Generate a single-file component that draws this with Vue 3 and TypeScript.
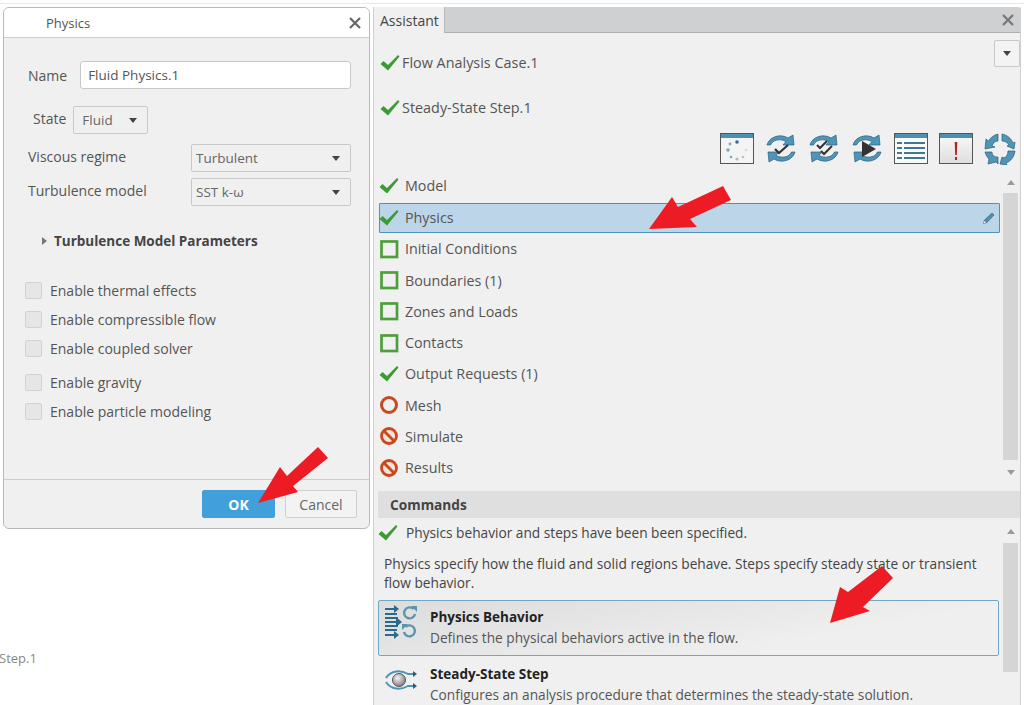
<script setup lang="ts">
type Status = 'check' | 'square' | 'ring' | 'no'
const steps: { label: string; status: Status; active?: boolean }[] = [
  { label: 'Model', status: 'check' },
  { label: 'Physics', status: 'check', active: true },
  { label: 'Initial Conditions', status: 'square' },
  { label: 'Boundaries (1)', status: 'square' },
  { label: 'Zones and Loads', status: 'square' },
  { label: 'Contacts', status: 'square' },
  { label: 'Output Requests (1)', status: 'check' },
  { label: 'Mesh', status: 'ring' },
  { label: 'Simulate', status: 'no' },
  { label: 'Results', status: 'no' },
]
const groupA = ['Enable thermal effects', 'Enable compressible flow', 'Enable coupled solver']
const groupB = ['Enable gravity', 'Enable particle modeling']
const arrows = [
  '258,503 280,467 287,476 318,447 328,458 293,486 298,492',
  '649,229 672,197 678,207 723,186 731,200 690,219 697,227',
  '830,623 840,587 848,592 882,566 893,578 863,607 870,611',
]
const checkPath = 'M.5 11 3.5 8 8 12 18 2 19.5 3.5 8 17.5Z'
const syncTop = 'M2 12 C4 4 15 0 23 5 L28 2 L29 12 L18 12 L21 8.5 C15 5.5 8 6.5 5.5 12 Z'
const syncBottom = 'M30 19 C28 27 17 31 9 26 L4 29 L3 19 L14 19 L11 22.5 C17 25.5 24 24.5 26.5 19 Z'
</script>

<template>
  <div class="page">
    <div class="left">
      <section class="dialog">
        <header class="dlg-head">
          <span class="title">Physics</span>
          <svg class="x" width="14" height="14" viewBox="0 0 14 14"><path d="M2 2 12 12M12 2 2 12" stroke="#666" stroke-width="2.2" /></svg>
        </header>
        <div class="dlg-body">
          <div class="name-row">
            <label>Name</label>
            <div class="input">Fluid Physics.1</div>
          </div>
          <div class="state-row">
            <label>State</label>
            <div class="select small">Fluid<i class="caret"></i></div>
          </div>
          <div class="field-row first">
            <label>Viscous regime</label>
            <div class="select wide">Turbulent<i class="caret"></i></div>
          </div>
          <div class="field-row">
            <label>Turbulence model</label>
            <div class="select wide">SST k-ω<i class="caret"></i></div>
          </div>
          <div class="expander"><i class="tri"></i>Turbulence Model Parameters</div>
          <div class="checks">
            <div v-for="c in groupA" :key="c" class="check-row"><span class="box"></span>{{ c }}</div>
          </div>
          <div class="checks second">
            <div v-for="c in groupB" :key="c" class="check-row"><span class="box"></span>{{ c }}</div>
          </div>
        </div>
        <footer class="dlg-foot">
          <button class="btn ok">OK</button>
          <button class="btn">Cancel</button>
        </footer>
      </section>
      <div class="stray">Step.1</div>
    </div>

    <section class="assistant">
      <div class="tabs">
        <div class="tab">Assistant</div>
        <svg class="tab-x" width="14" height="14" viewBox="0 0 14 14"><path d="M2 2 12 12M12 2 2 12" stroke="#777" stroke-width="2.2" /></svg>
      </div>

      <div class="cases">
        <div class="case-list">
          <div class="case">
            <svg class="st" width="20" height="18" viewBox="0 0 20 18"><path :d="checkPath" fill="#3d9a35" /></svg>
            Flow Analysis Case.1
          </div>
          <div class="case">
            <svg class="st" width="20" height="18" viewBox="0 0 20 18"><path :d="checkPath" fill="#3d9a35" /></svg>
            Steady-State Step.1
          </div>
        </div>
        <div class="drop"><i class="caret"></i></div>
      </div>

      <div class="toolbar">
        <svg class="tool" width="34" height="32" viewBox="0 0 34 32">
          <rect x="0.5" y="0.5" width="33" height="30" fill="#f4f4f4" stroke="#555" />
          <rect x="1" y="1" width="32" height="4" fill="#4f8fb0" />
          <g fill="#7fa6bc"><circle cx="17" cy="9" r="1.8" fill="#2f6f95" /><circle cx="10" cy="11" r="1.4" /><circle cx="8" cy="17" r="1.8" /><circle cx="11" cy="24" r="1.3" /><circle cx="17" cy="26" r="1.6" fill="#a9bcc7" /><circle cx="23" cy="24" r="1.3" fill="#b5c3cc" /><circle cx="26" cy="17" r="1.2" fill="#d4d8db" /></g>
        </svg>
        <svg class="tool" width="32" height="32" viewBox="0 0 32 32">
          <path :d="syncTop" fill="#4f95b8" stroke="#2b5d78" stroke-width=".7" />
          <path :d="syncBottom" fill="#4f95b8" stroke="#2b5d78" stroke-width=".7" />
          <path d="M10 16 14 20 23 12" fill="none" stroke="#333" stroke-width="2.2" />
        </svg>
        <svg class="tool" width="32" height="32" viewBox="0 0 32 32">
          <path :d="syncTop" fill="#4f95b8" stroke="#2b5d78" stroke-width=".7" />
          <path :d="syncBottom" fill="#4f95b8" stroke="#2b5d78" stroke-width=".7" />
          <path d="M9 12 12 15 19 8M13 18 16 21 24 13" fill="none" stroke="#333" stroke-width="2" />
        </svg>
        <svg class="tool" width="32" height="32" viewBox="0 0 32 32">
          <path :d="syncTop" fill="#4f95b8" stroke="#2b5d78" stroke-width=".7" />
          <path :d="syncBottom" fill="#4f95b8" stroke="#2b5d78" stroke-width=".7" />
          <path d="M11 8 25 16 11 24Z" fill="#333" />
        </svg>
        <svg class="tool" width="34" height="32" viewBox="0 0 34 32">
          <rect x="0.5" y="0.5" width="33" height="30" fill="#fafafa" stroke="#555" />
          <rect x="1" y="1" width="32" height="4" fill="#4f8fb0" />
          <path d="M3 10H8M10 10H31M3 15H8M10 15H31M3 20H8M10 20H31M3 25H8M10 25H31" stroke="#3f7896" stroke-width="2" />
        </svg>
        <svg class="tool" width="34" height="32" viewBox="0 0 34 32">
          <defs><linearGradient id="alertBg" x1="0" y1="0" x2="0" y2="1"><stop offset="0" stop-color="#fafafa" /><stop offset="1" stop-color="#dedede" /></linearGradient></defs>
          <rect x="0.5" y="0.5" width="33" height="30" fill="url(#alertBg)" stroke="#555" />
          <rect x="1" y="1" width="32" height="4" fill="#4f8fb0" />
          <path d="M15.7 9H18.3L17.8 22H16.2Z" fill="#b02525" />
          <rect x="16" y="24" width="2" height="3" fill="#b02525" />
        </svg>
        <svg class="tool" width="32" height="32" viewBox="0 0 32 32">
          <g fill="#4f95b8" stroke="#2b5d78" stroke-width=".7">
            <path d="M14 1V8C11 8 9 10 8 13L11 14 1 16 2 6 4.500 8C7 4 10 2 14 1Z" />
            <path d="M18 1C23 2 27 5 29 10L31 9 30 16 23 13 25 12C24 10 21 8 18 8Z" />
            <path d="M31 18C30 24 27 28 22 30L23 32 16 31 18 24 20 25C22 24 24 22 24 18Z" />
            <path d="M1 19H8C8 22 10 24 14 24V31L12 29 4 31 5 26C3 24 2 22 1 19Z" />
          </g>
        </svg>
      </div>

      <div class="steps-wrap">
        <ul class="steps">
          <li v-for="s in steps" :key="s.label" class="step" :class="{ active: s.active }">
            <svg width="20" height="20" viewBox="0 0 20 20" class="st">
              <path v-if="s.status === 'check'" :d="checkPath" fill="#3d9a35" />
              <rect v-else-if="s.status === 'square'" x="2.500" y="2.500" width="15.500" height="15.500" fill="#f0f0f0" stroke="#4f9e3c" stroke-width="2.700" />
              <circle v-else-if="s.status === 'ring'" cx="10" cy="10" r="7.500" fill="none" stroke="#c8481f" stroke-width="3" />
              <g v-else>
                <circle cx="10" cy="10" r="7.500" fill="#f3e2dc" stroke="#c8481f" stroke-width="2.800" />
                <path d="M5 5 15 15" stroke="#c8481f" stroke-width="2.800" />
              </g>
            </svg>
            <span>{{ s.label }}</span>
            <svg v-if="s.active" class="pencil" width="14" height="14" viewBox="0 0 14 14">
              <path d="M1.500 12.500 2.500 9 10 2 12 4 5 11.500Z" fill="#4f8fb0" stroke="#2b5d78" stroke-width=".6" />
              <path d="M1.500 12.500 2.500 10 4 11.500Z" fill="#fff" />
            </svg>
          </li>
        </ul>
        <div class="scroll upper">
          <i class="up"></i>
          <div class="thumb"></div>
          <i class="down"></i>
        </div>
      </div>

      <div class="cmd-head">Commands</div>

      <div class="cmd-wrap">
        <div class="cmd-main">
          <div class="cmd-status">
            <svg width="20" height="18" viewBox="0 0 20 18"><path :d="checkPath" fill="#3d9a35" /></svg>
            Physics behavior and steps have been been specified.
          </div>
          <p class="desc">Physics specify how the fluid and solid regions behave. Steps specify steady state or transient flow behavior.</p>
          <div class="cmd card">
            <svg class="cmd-icon" width="38" height="38" viewBox="0 0 38 38">
              <path d="M1 5H12M1 10H13M1 14H14M1 18H16M1 22H14M1 26H13M1 31H12" fill="none" stroke="#2b6a8c" stroke-width="2" />
              <path d="M10 1 15 5 10 9ZM12 13 18 18 12 23ZM10 27 15 31 10 35Z" fill="#2b6a8c" />
              <path d="M29.500 5A5.500 5.500 0 1 0 31 10" fill="none" stroke="#5a94b0" stroke-width="2.400" />
              <path d="M27 2H33V8Z" fill="#5a94b0" />
              <path d="M21.500 23A5.500 5.500 0 1 1 20 28" fill="none" stroke="#5a94b0" stroke-width="2.400" />
              <path d="M24 20H18V26Z" fill="#5a94b0" />
            </svg>
            <div class="cmd-text">
              <strong>Physics Behavior</strong>
              <span>Defines the physical behaviors active in the flow.</span>
            </div>
          </div>
          <div class="cmd">
            <svg class="cmd-icon" width="38" height="38" viewBox="0 0 38 38">
              <defs><radialGradient id="ball" cx=".4" cy=".35" r=".7"><stop offset="0" stop-color="#f5f5f5" /><stop offset="1" stop-color="#777" /></radialGradient></defs>
              <path d="M2 17C7 9 17 9 24 13H31M2 21C7 29 17 29 24 25H31" fill="none" stroke="#4f95b8" stroke-width="2" />
              <path d="M29 10 33 13 29 16ZM29 22 33 25 29 28Z" fill="#2b5d78" />
              <circle cx="15" cy="19" r="6.500" fill="url(#ball)" stroke="#555" />
            </svg>
            <div class="cmd-text">
              <strong>Steady-State Step</strong>
              <span>Configures an analysis procedure that determines the steady-state solution.</span>
            </div>
          </div>
        </div>
        <div class="scroll lower">
          <i class="up"></i>
          <div class="thumb"></div>
        </div>
      </div>
    </section>

    <svg class="arrows" width="1024" height="705" viewBox="0 0 1024 705">
      <polygon v-for="p in arrows" :key="p" :points="p" fill="#ed1c24" />
    </svg>
  </div>
</template>

<style>
html, body { margin: 0; background: #fff; }
</style>

<style scoped>
* { box-sizing: border-box; }
.page {
  position: relative;
  width: 1024px;
  height: 705px;
  overflow: hidden;
  display: flex;
  gap: 3px;
  padding: 7px 3px 0 3px;
  background: linear-gradient(#fff 3px, #e7e8e9 3px, #e7e8e9 4px, #fff 4px);
  font-family: "Open Sans", "Noto Sans", sans-serif;
  font-size: 14px;
  color: #555;
}
.left { width: 367px; flex: none; display: flex; flex-direction: column; }
.dialog {
  height: 522px;
  display: flex;
  flex-direction: column;
  background: #f0f0f0;
  border: 1px solid #b9b9b9;
  border-radius: 6px;
  overflow: hidden;
}
.dlg-head {
  height: 30px;
  flex: none;
  background: #fff;
  border-bottom: 1px solid #cfcfcf;
  display: flex;
  align-items: center;
  justify-content: space-between;
  padding: 0 7px 0 42px;
}
.title { font-size: 13px; }
.dlg-body { flex: 1; padding: 23px 18px 0 24px; }
label { color: #555; }
.name-row { display: flex; align-items: center; gap: 13px; }
.input {
  flex: 1;
  height: 28px;
  background: #fff;
  border: 1px solid #c8c8c8;
  border-radius: 3px;
  padding: 0 7px;
  line-height: 26px;
  font-size: 13.5px;
  color: #555;
}
.state-row { display: flex; align-items: center; gap: 7px; margin: 17px 0 0 5px; }
.state-row label { transform: translateY(-2px); }
.select {
  height: 28px;
  display: flex;
  align-items: center;
  justify-content: space-between;
  border: 1px solid #c8c8c8;
  border-radius: 2px;
  padding: 0 10px 0 8px;
  background: #f0f0f0;
  font-size: 13.5px;
  color: #666;
}
.select.small { width: 75px; }
.select.wide { width: 160px; padding-left: 4px; }
.caret {
  display: block;
  width: 0;
  height: 0;
  border-left: 4px solid transparent;
  border-right: 4px solid transparent;
  border-top: 5px solid #444;
}
.field-row { display: flex; align-items: center; justify-content: space-between; margin-top: 6px; }
.field-row.first { margin-top: 10px; }
.field-row label { transform: translateY(-2px); }
.expander {
  margin: 25px 0 0 14px;
  font-size: 13.5px;
  font-weight: 700;
  color: #444;
  display: flex;
  align-items: center;
  gap: 7px;
  line-height: 20px;
}
.tri {
  width: 0;
  height: 0;
  border-top: 4px solid transparent;
  border-bottom: 4px solid transparent;
  border-left: 5px solid #777;
}
.checks { margin: 29px 0 0 -3px; display: flex; flex-direction: column; gap: 9px; }
.checks.second { margin-top: 14px; }
.check-row { display: flex; align-items: center; gap: 8px; height: 20px; color: #555; }
.box { width: 17px; height: 17px; background: #e6e6e6; border: 1px solid #d2d2d2; border-radius: 2px; }
.dlg-foot {
  height: 49px;
  flex: none;
  border-top: 1px solid #cdcdcd;
  display: flex;
  justify-content: flex-end;
  gap: 10px;
  padding: 10px 12px 0 0;
}
.btn {
  width: 72px;
  height: 28px;
  border: 1px solid #cfcfcf;
  border-radius: 2px;
  background: #f3f3f3;
  font: inherit;
  color: #666;
  padding: 0;
}
.btn.ok { width: 73px; background: #41a0da; border-color: #41a0da; color: #fff; font-weight: 700; }
.stray { margin: 119px 0 0 -4px; line-height: 20px; font-size: 13px; color: #888; }

.assistant {
  width: 648px;
  flex: none;
  height: 698px;
  background: #f0f0f0;
  border-left: 1px solid #d0d0d0;
  border-right: 1px solid #d0d0d0;
  display: flex;
  flex-direction: column;
}
.tabs {
  height: 26px;
  flex: none;
  display: flex;
  justify-content: space-between;
  align-items: center;
  background: #cfd0d1;
  border-bottom: 1px solid #aeaeae;
  border-radius: 3px 3px 0 0;
  padding-right: 5px;
}
.tab { width: 71px; height: 26px; background: #f0f0f0; padding: 1px 0 0 6px; line-height: 25px; color: #444; border-right: 1px solid #bbb; }
.cases { height: 100px; flex: none; display: flex; justify-content: space-between; padding-top: 7px; }
.case-list { display: flex; flex-direction: column; gap: 25px; padding: 12px 0 0 6px; font-size: 14.400px; }
.case { display: flex; align-items: center; gap: 2px; height: 20px; color: #555; }
.drop {
  width: 26px;
  height: 27px;
  background: #f3f3f3;
  border: 1px solid #c9c9c9;
  border-radius: 2px;
  display: flex;
  align-items: center;
  justify-content: center;
}
.toolbar { height: 32px; flex: none; display: flex; justify-content: flex-end; align-items: flex-start; gap: 11px; padding-right: 4px; }
.tool { flex: none; }
.steps-wrap { height: 326px; flex: none; display: flex; padding: 5px 3px 0 5px; gap: 3px; }
.steps { list-style: none; margin: 0; padding: 0; width: 621px; flex: none; font-size: 14.300px; }
.step {
  height: 31.250px;
  display: flex;
  align-items: center;
  gap: 6px;
  color: #555;
  position: relative;
}
.step.active { background: #bcd5e9; border: 1px solid #4d93b7; height: 30.500px; margin-top: 1.400px; border-radius: 1px; }
.step.active .st { margin-left: -1px; }
.pencil { position: absolute; right: 3px; top: 7px; }
.scroll { width: 15px; flex: none; display: flex; flex-direction: column; align-items: center; }
.scroll.upper { padding-top: 10px; height: 316px; }
.scroll.upper .thumb { width: 15px; height: 267px; margin-top: 8px; }
.scroll.lower { padding-top: 11px; }
.scroll.lower .thumb { width: 15px; height: 129px; margin-top: 9px; }
.thumb { background: #d5d5d5; }
.up, .down { display: block; width: 0; height: 0; border-left: 4px solid transparent; border-right: 4px solid transparent; flex: none; }
.up { border-bottom: 5px solid #9a9a9a; }
.down { border-top: 5px solid #9a9a9a; margin-top: 10px; }
.cmd-head {
  height: 27px;
  flex: none;
  margin-left: 4px;
  background: #dfdfdf;
  font-size: 13.700px;
  font-weight: 700;
  color: #444;
  padding-left: 12px;
  line-height: 27px;
}
.cmd-wrap { flex: 1; display: flex; padding: 0 3px 0 4px; gap: 4px; overflow: hidden; font-size: 13.700px; }
.cmd-main { width: 621px; flex: none; }
.cmd-status { height: 28px; display: flex; align-items: center; gap: 8px; color: #444; }
.desc { margin: 8px 0 0 6px; line-height: 19px; color: #444; width: 610px; }
.cmd { display: flex; align-items: center; gap: 8px; height: 56px; padding: 0 4px 0 6px; }
.cmd-icon { margin-bottom: 8px; flex: none; }
.cmd.card {
  margin-top: 8px;
  padding-left: 5px;
  padding-bottom: 2px;
  border: 1px solid #6fa9c9;
  border-radius: 2px;
  background: linear-gradient(170deg, #dcdcdc, #efefef 70%);
}
.cmd:not(.card) { margin-top: 5px; height: 46px; }
.cmd-text { display: flex; flex-direction: column; gap: 1px; line-height: 19px; }
.cmd-text strong { color: #222; font-weight: 700; font-size: 13.500px; }
.cmd-text span { color: #555; }
.arrows { position: absolute; left: 0; top: 0; pointer-events: none; }
</style>
